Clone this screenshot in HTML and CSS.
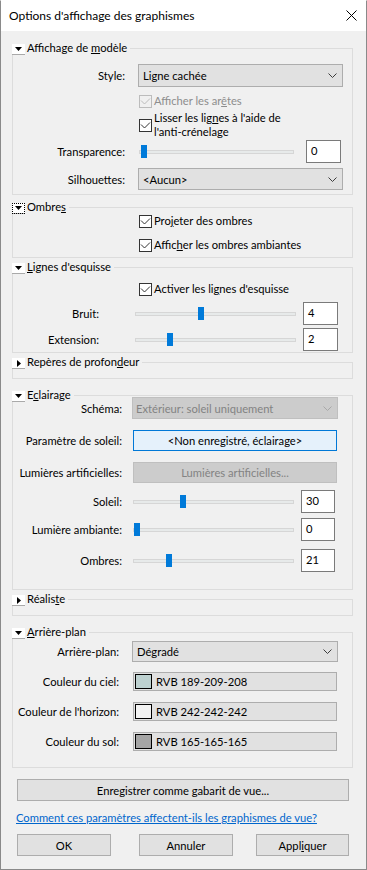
FILE: index.html
```html
<!DOCTYPE html>
<html lang="fr">
<head>
<meta charset="utf-8">
<title>Options d'affichage des graphismes</title>
<link rel="stylesheet" href="styles.css">
</head>
<body>
<div class="win">
  <div class="titlebar">
    <span class="title">Options d'affichage des graphismes</span>
    <svg class="close" width="11" height="11" viewBox="0 0 11 11"><path d="M0.5 0.5L10.5 10.5M10.5 0.5L0.5 10.5" stroke="#000" stroke-width="1" fill="none"/></svg>
  </div>
  <div class="content">

    <section class="group g1">
      <div class="ghead">
        <span class="tgl"><svg width="7" height="4" viewBox="0 0 7 4"><path d="M0 0H7L3.5 4Z" fill="#000"/></svg></span>
        <span class="gtitle">Affichage de <u>m</u>odèle</span>
        <span class="gline"></span>
      </div>
      <div class="gbody">
        <div class="row h23">
          <span class="lbl">Style:</span>
          <div class="combo w205"><span>Ligne cachée</span><svg class="chev" width="9" height="5" viewBox="0 0 9 5"><path d="M0.5 0.5L4.5 4.5L8.5 0.5" stroke="#3c3c3c" fill="none"/></svg></div>
        </div>
        <div class="row chk h14 mt7 disabled">
          <span class="cb dis"><svg width="11" height="11" viewBox="0 0 11 11"><path d="M1 4.5L4.5 8L10 2.5" stroke="#bcbcbc" fill="none"/></svg></span>
          <span class="ctext">Afficher les ar<u>ê</u>tes</span>
        </div>
        <div class="row chk h28 mt3">
          <span class="cb"><svg width="11" height="11" viewBox="0 0 11 11"><path d="M1 4.5L4.5 8L10 2.5" stroke="#333" fill="none"/></svg></span>
          <span class="ctext">Lisser les lig<u>n</u>es à l'aide de<br>l'anti-crénelage</span>
        </div>
        <div class="row h23 mt1">
          <span class="lbl">Transparence:</span>
          <div class="slider s1"><span class="thumb" style="left:1px"></span></div>
          <div class="tbox t1">0</div>
        </div>
        <div class="row h22 mt5">
          <span class="lbl">Silhouettes:</span>
          <div class="combo w205"><span>&lt;Aucun&gt;</span><svg class="chev" width="9" height="5" viewBox="0 0 9 5"><path d="M0.5 0.5L4.5 4.5L8.5 0.5" stroke="#3c3c3c" fill="none"/></svg></div>
        </div>
      </div>
    </section>

    <section class="group g2">
      <div class="ghead">
        <span class="tgl focus"><svg width="7" height="4" viewBox="0 0 7 4"><path d="M0 0H7L3.5 4Z" fill="#000"/></svg></span>
        <span class="gtitle">Ombre<u>s</u></span>
        <span class="gline"></span>
      </div>
      <div class="gbody">
        <div class="row chk h14">
          <span class="cb"><svg width="11" height="11" viewBox="0 0 11 11"><path d="M1 4.5L4.5 8L10 2.5" stroke="#333" fill="none"/></svg></span>
          <span class="ctext">Pro<u>j</u>eter des ombres</span>
        </div>
        <div class="row chk h14 mt10">
          <span class="cb"><svg width="11" height="11" viewBox="0 0 11 11"><path d="M1 4.5L4.5 8L10 2.5" stroke="#333" fill="none"/></svg></span>
          <span class="ctext">Affic<u>h</u>er les ombres ambiantes</span>
        </div>
      </div>
    </section>

    <section class="group g3">
      <div class="ghead">
        <span class="tgl"><svg width="7" height="4" viewBox="0 0 7 4"><path d="M0 0H7L3.5 4Z" fill="#000"/></svg></span>
        <span class="gtitle"><u>L</u>ignes d'esquisse</span>
        <span class="gline"></span>
      </div>
      <div class="gbody">
        <div class="row chk h14">
          <span class="cb"><svg width="11" height="11" viewBox="0 0 11 11"><path d="M1 4.5L4.5 8L10 2.5" stroke="#333" fill="none"/></svg></span>
          <span class="ctext">Activer les li<u>g</u>nes d'esquisse</span>
        </div>
        <div class="row h23 mt6">
          <span class="lbl">Bruit:</span>
          <div class="slider s3"><span class="thumb" style="left:62px"></span></div>
          <div class="tbox t3">4</div>
        </div>
        <div class="row h23 mt3">
          <span class="lbl">Extension:</span>
          <div class="slider s3"><span class="thumb" style="left:31px"></span></div>
          <div class="tbox t3">2</div>
        </div>
      </div>
    </section>

    <section class="group g4 collapsed">
      <div class="ghead">
        <span class="tgl"><svg width="4" height="7" viewBox="0 0 4 7"><path d="M0 0V7L4 3.5Z" fill="#000"/></svg></span>
        <span class="gtitle">Repères de profon<u>d</u>eur</span>
        <span class="gline"></span>
      </div>
      <div class="gbody"></div>
    </section>

    <section class="group g5">
      <div class="ghead">
        <span class="tgl"><svg width="7" height="4" viewBox="0 0 7 4"><path d="M0 0H7L3.5 4Z" fill="#000"/></svg></span>
        <span class="gtitle">E<u>c</u>lairage</span>
        <span class="gline"></span>
      </div>
      <div class="gbody">
        <div class="row h22 first">
          <span class="lbl">Schéma:</span>
          <div class="combo w206 off"><span>Extérieur: soleil uniquement</span><svg class="chev" width="9" height="5" viewBox="0 0 9 5"><path d="M0.5 0.5L4.5 4.5L8.5 0.5" stroke="#a8a8a8" fill="none"/></svg></div>
        </div>
        <div class="row h21 mt11">
          <span class="lbl">Paramètre de soleil:</span>
          <div class="btn sun">&lt;Non enregistré, éclairage&gt;</div>
        </div>
        <div class="row h21 mt11">
          <span class="lbl">Lumières artificielles:</span>
          <div class="btn wide off">Lumières artificielles...</div>
        </div>
        <div class="row h23 mt7">
          <span class="lbl">Soleil:</span>
          <div class="slider s5"><span class="thumb" style="left:46px"></span></div>
          <div class="tbox t5">30</div>
        </div>
        <div class="row h23 mt5">
          <span class="lbl">Lumière ambiante:</span>
          <div class="slider s5"><span class="thumb" style="left:0px"></span></div>
          <div class="tbox t5">0</div>
        </div>
        <div class="row h23 mt8">
          <span class="lbl">Ombres:</span>
          <div class="slider s5"><span class="thumb" style="left:32px"></span></div>
          <div class="tbox t5">21</div>
        </div>
      </div>
    </section>

    <section class="group g6 collapsed">
      <div class="ghead">
        <span class="tgl"><svg width="4" height="7" viewBox="0 0 4 7"><path d="M0 0V7L4 3.5Z" fill="#000"/></svg></span>
        <span class="gtitle">Réalis<u>t</u>e</span>
        <span class="gline"></span>
      </div>
      <div class="gbody"></div>
    </section>

    <section class="group g7">
      <div class="ghead">
        <span class="tgl"><svg width="7" height="4" viewBox="0 0 7 4"><path d="M0 0H7L3.5 4Z" fill="#000"/></svg></span>
        <span class="gtitle"><u>A</u>rrière-plan</span>
        <span class="gline"></span>
      </div>
      <div class="gbody">
        <div class="row h21">
          <span class="lbl">Arrière-plan:</span>
          <div class="combo w206"><span>Dégradé</span><svg class="chev" width="9" height="5" viewBox="0 0 9 5"><path d="M0.5 0.5L4.5 4.5L8.5 0.5" stroke="#3c3c3c" fill="none"/></svg></div>
        </div>
        <div class="row h19 mt10">
          <span class="lbl">Couleur du ciel:</span>
          <div class="colorf"><span class="sw" style="background:rgb(189,209,208)"></span><span>RVB 189-209-208</span></div>
        </div>
        <div class="row h19 mt11">
          <span class="lbl">Couleur de l'horizon:</span>
          <div class="colorf"><span class="sw" style="background:rgb(242,242,242)"></span><span>RVB 242-242-242</span></div>
        </div>
        <div class="row h19 mt11">
          <span class="lbl">Couleur du sol:</span>
          <div class="colorf"><span class="sw" style="background:rgb(165,165,165)"></span><span>RVB 165-165-165</span></div>
        </div>
      </div>
    </section>

    <div class="footer">
      <div class="btn save">Enregistrer comme gabarit de vue...</div>
      <a class="help" href="#">Comment ces paramètres affectent-ils les graphismes de vue?</a>
      <div class="actions">
        <div class="btn act ok">OK</div>
        <div class="btn act">Annuler</div>
        <div class="btn act apply">Appl<u>i</u>quer</div>
      </div>
    </div>
  </div>
</div>
</body>
</html>
```

FILE: styles.css
```css
* { box-sizing: border-box; }
html, body { margin: 0; padding: 0; background: #fff; }
body {
  font-family: Lato, "Noto Sans", sans-serif;
  font-size: 11.2px;
  color: #000;
}
u { text-decoration: underline; text-underline-offset: 1px; }

.win {
  width: 367px;
  height: 870px;
  border: 1px solid #8a8a8a;
  border-top-color: #ffffff;
  background: #f0f0f0;
  display: flex;
  flex-direction: column;
}
.titlebar {
  height: 30px;
  flex: none;
  background: #fff;
  display: flex;
  align-items: center;
  justify-content: space-between;
  padding: 0 9px 0 8px;
}
.title { font-size: 12px; line-height: 16px; }
.close { display: block; margin-top: -2px; }

.content { padding: 10px 13px 0 11px; }

/* groups */
.group { display: flex; flex-direction: column; }
.ghead { display: flex; height: 14px; }
.tgl {
  flex: none;
  width: 13px;
  height: 11px;
  margin-top: 3px;
  background: #fff;
  border-bottom: 1px solid #a9a9a9;
  display: flex;
  align-items: center;
  justify-content: center;
}
.tgl svg { display: block; }
.tgl.focus { outline: 1px dotted #000; outline-offset: -1px; }
.gtitle { margin-left: 2px; line-height: 14px; white-space: nowrap; }
.gline {
  flex: 1;
  margin: 7px 0 0 3px;
  border-top: 1px solid #dcdcdc;
  border-right: 1px solid #dcdcdc;
}
.gbody {
  border: 1px solid #dcdcdc;
  border-top: none;
}

.g1 .gbody { height: 140px; padding-top: 9px; --lw: 112px; --gap: 13px; }
.g2 { margin-top: 5px; }
.g2 .gbody { height: 44px; }
.g3 { margin-top: 2px; }
.g3 .gbody { height: 79px; padding-top: 8px; --lw: 86px; --gap: 36px; }
.g4 { margin-top: 2px; }
.collapsed .gbody { height: 10px; }
.g5 { margin-top: 9px; }
.g5 .gbody { height: 188px; --lw: 109px; --gap: 10px; }
.g6 { margin-top: 2px; }
.g7 { margin-top: 9px; }
.g7 .gbody { height: 129px; padding-top: 2px; --lw: 106px; --gap: 13px; }

/* rows */
.row { display: flex; align-items: center; }
.h14 { height: 14px; }
.h19 { height: 19px; }
.h21 { height: 21px; }
.h22 { height: 22px; }
.h23 { height: 23px; }
.h28 { height: 28px; }
.mt1 { margin-top: 1px; }
.mt3 { margin-top: 3px; }
.mt5 { margin-top: 5px; }
.mt6 { margin-top: 6px; }
.mt7 { margin-top: 7px; }
.mt8 { margin-top: 8px; }
.mt10 { margin-top: 10px; }
.mt11 { margin-top: 11px; }
.first { margin-top: -5px; }

.lbl {
  flex: none;
  width: var(--lw);
  margin-right: var(--gap);
  text-align: right;
  white-space: nowrap;
}

/* checkbox rows */
.chk { padding-left: 126px; }
.cb {
  flex: none;
  width: 13px;
  height: 13px;
  border: 1px solid #333;
  background: #fff;
}
.cb svg { display: block; }
.cb.dis { border-color: #bcbcbc; background: #f0f0f0; }
.ctext { margin-left: 2px; line-height: 14px; }
.disabled .ctext { color: #8d8d8d; }

/* combo */
.combo {
  height: 100%;
  display: flex;
  align-items: center;
  justify-content: space-between;
  padding: 0 5px 0 4px;
  background: #e1e1e1;
  border: 1px solid #adadad;
  white-space: nowrap;
}
.combo .chev { display: block; }
.w205 { width: 205px; }
.w206 { width: 206px; }
.combo.off { background: #cccccc; border-color: #bfbfbf; color: #838383; padding-left: 3px; }

/* slider */
.slider {
  position: relative;
  flex: none;
  height: 4px;
  background: #e7eaea;
  border: 1px solid #d6d6d6;
}
.thumb {
  position: absolute;
  top: -6px;
  width: 6px;
  height: 13px;
  background: #007ad9;
}
.s1 { width: 155px; margin-left: 1px; }
.s3 { width: 161px; }
.s5 { width: 161px; margin-left: 1px; }

.tbox {
  flex: none;
  height: 100%;
  background: #fff;
  border: 1px solid #7a7a7a;
  padding: 2px 0 0 4px;
  line-height: 16px;
}
.t1 { width: 35px; margin-left: 12px; }
.t3 { width: 35px; margin-left: 7px; }
.t5 { width: 34px; margin-left: 7px; }

/* buttons */
.btn {
  display: flex;
  align-items: center;
  justify-content: center;
  background: #e1e1e1;
  border: 1px solid #adadad;
  white-space: nowrap;
}
.row .btn { height: 100%; width: 204px; margin-left: 1px; }
.btn.sun { background: #e5f1fb; border-color: #0078d7; }
.btn.off { background: #cccccc; border-color: #bfbfbf; color: #838383; }

/* color fields */
.colorf {
  height: 100%;
  width: 204px;
  margin-left: 1px;
  display: flex;
  align-items: center;
  background: #e1e1e1;
  border: 1px solid #adadad;
  white-space: nowrap;
}
.sw {
  flex: none;
  width: 17px;
  height: 15px;
  margin: 0 4px 0 1px;
  border: 1px solid #000;
}

/* footer */
.footer { margin: 11px 4px 0 5px; display: flex; flex-direction: column; }
.btn.save { height: 22px; }
.help {
  margin: 10px 0 0 -1px;
  line-height: 14px;
  color: #0066cc;
  text-decoration: underline;
  white-space: nowrap;
}
.actions { display: flex; margin-top: 9px; }
.btn.act { width: 94px; height: 22px; }
.btn.ok { margin-right: 28px; }
.btn.apply { margin-left: auto; width: 93px; }
```
